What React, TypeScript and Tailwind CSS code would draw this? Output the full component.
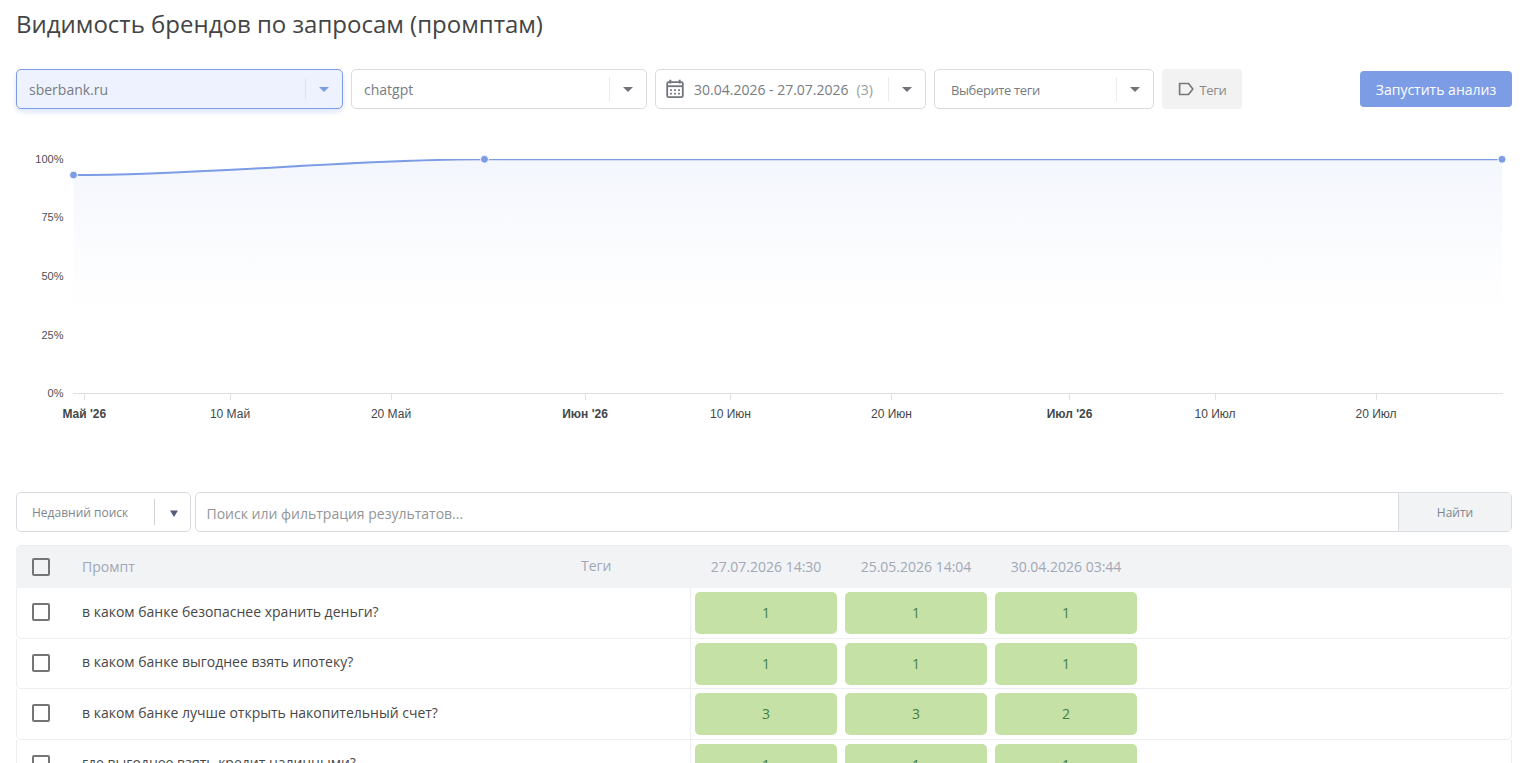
import React, { useState } from 'react';

const yLabels = [
  { text: '100%', y: 159 },
  { text: '75%', y: 217 },
  { text: '50%', y: 276 },
  { text: '25%', y: 335 },
  { text: '0%', y: 393 },
];

const xLabels = [
  { text: "Май '26", x: 84.3, bold: true },
  { text: '10 Май', x: 230, bold: false },
  { text: '20 Май', x: 391, bold: false },
  { text: "Июн '26", x: 585, bold: true },
  { text: '10 Июн', x: 730.5, bold: false },
  { text: '20 Июн', x: 891.5, bold: false },
  { text: "Июл '26", x: 1069.5, bold: true },
  { text: '10 Июл', x: 1215, bold: false },
  { text: '20 Июл', x: 1376, bold: false },
];

const points = [
  { x: 73.5, y: 175 },
  { x: 484.5, y: 159.3 },
  { x: 1502, y: 159.3 },
];

const dates = ['27.07.2026 14:30', '25.05.2026 14:04', '30.04.2026 03:44'];

const rows = [
  { prompt: 'в каком банке безопаснее хранить деньги?', values: [1, 1, 1] },
  { prompt: 'в каком банке выгоднее взять ипотеку?', values: [1, 1, 1] },
  { prompt: 'в каком банке лучше открыть накопительный счет?', values: [3, 3, 2] },
  { prompt: 'где выгоднее взять кредит наличными?', values: [1, 1, 1] },
];

function Caret({ className }: { className: string }) {
  return (
    <svg viewBox="0 0 10 5" className={`w-[10px] h-[5px] ${className}`} fill="currentColor">
      <path d="M0 0h10L5 5z" />
    </svg>
  );
}

function CalendarIcon() {
  return (
    <svg viewBox="0 0 18 20" className="w-[18px] h-5 text-[#70757c]" fill="none" stroke="currentColor">
      <rect x="1.2" y="3.2" width="15.6" height="15" rx="1.4" strokeWidth="1.8" />
      <path d="M1 7.2h16" strokeWidth="1.8" />
      <path d="M4.3 0.8v3.7M13.7 0.8v3.7" strokeWidth="2" />
      <path d="M4.1 11.2h10.5M4.1 14.6h10.5" strokeWidth="1.8" strokeDasharray="1.8 2.2" />
    </svg>
  );
}

function Select({ children, width }: { children: React.ReactNode; width: string }) {
  return (
    <div className={`${width} h-10 flex items-center border border-[#d9dbe0] rounded-[5px] bg-white text-[#777c83]`}>
      <div className="flex-1 flex items-center">{children}</div>
      <div className="w-px h-6 bg-[#ececf0]" />
      <div className="w-9 flex justify-center">
        <Caret className="text-[#70747a]" />
      </div>
    </div>
  );
}

function Checkbox() {
  const [checked, setChecked] = useState(false);
  return (
    <button
      onClick={() => setChecked(!checked)}
      className={`block w-[18px] h-[18px] border-2 border-[#757575] rounded-[2px] ${checked ? 'bg-[#7c9ce6]' : 'bg-transparent'}`}
    />
  );
}

function Chart() {
  const curve = 'M73.5 175C210.5 175 347.5 159.3 484.5 159.3H1502';
  return (
    <svg viewBox="0 140 1526 300" className="block w-[1526px] h-[300px] font-['Liberation_Sans',sans-serif]">
      <defs>
        <linearGradient id="area" x1="0" y1="159" x2="0" y2="393" gradientUnits="userSpaceOnUse">
          <stop offset="0" stopColor="#7c9ce6" stopOpacity="0.09" />
          <stop offset="0.45" stopColor="#7c9ce6" stopOpacity="0.02" />
          <stop offset="0.7" stopColor="#7c9ce6" stopOpacity="0" />
        </linearGradient>
        <clipPath id="plot">
          <rect x="70" y="159" width="1440" height="235" />
        </clipPath>
      </defs>
      {yLabels.map((l) => (
        <text key={l.text} x="63.5" y={l.y + 4} textAnchor="end" fontSize="11" fill="#4a4f52">
          {l.text}
        </text>
      ))}
      <path d={`${curve}V393.5H73.5Z`} fill="url(#area)" />
      <path d={curve} fill="none" stroke="#7c9ce6" strokeWidth="2" clipPath="url(#plot)" />
      <path d="M73 393.5H1503" stroke="#e0e0e0" />
      {xLabels.map((l) => (
        <g key={l.text}>
          <path d={`M${Math.floor(l.x) + 0.5} 394v6`} stroke="#e0e0e0" />
          <text
            x={l.x}
            y="418"
            textAnchor="middle"
            fontSize="12"
            fontWeight={l.bold ? 700 : 400}
            fill="#42474a"
          >
            {l.text}
          </text>
        </g>
      ))}
      {points.map((p) => (
        <circle key={p.x} cx={p.x} cy={p.y} r="4" fill="#7c9ce6" stroke="#fff" strokeWidth="1" />
      ))}
    </svg>
  );
}

export default function App() {
  const [query, setQuery] = useState('');

  return (
    <div className="w-[1526px] h-[763px] overflow-hidden bg-white font-['Open_Sans','Noto_Sans',sans-serif] text-sm">
      <h1 className="h-[69px] pl-4 pt-[6px] text-2xl leading-9 text-[#444]">
        Видимость брендов по запросам (промптам)
      </h1>

      <div className="h-[71px] pl-4 pr-[14px] flex items-start">
        <div className="w-[327px] h-10 flex items-center border border-[#7c9ce6] rounded-[5px] bg-[#eef2fe] shadow-[0_3px_5px_rgba(124,156,230,0.25)]">
          <span className="flex-1 pl-3 pt-[2px] text-[#777c83]">sberbank.ru</span>
          <div className="w-px h-5 bg-[#dde1ee]" />
          <div className="w-9 flex justify-center">
            <Caret className="text-[#7c9ce6]" />
          </div>
        </div>
        <div className="ml-2 flex gap-2">
          <Select width="w-[296px]">
            <span className="pl-3 pt-[2px]">chatgpt</span>
          </Select>
          <Select width="w-[271px]">
            <div className="pl-[10px] flex items-center whitespace-nowrap">
              <CalendarIcon />
              <span className="ml-[10px] pt-[2px]">30.04.2026 - 27.07.2026</span>
              <span className="ml-2 pt-[2px] text-[#9a9da3]">(3)</span>
            </div>
          </Select>
          <Select width="w-[220px]">
            <span className="pl-4 pt-[3px] text-[13px] tracking-[-0.38px]">Выберите теги</span>
          </Select>
          <button className="w-[80px] h-10 flex items-center justify-center gap-[6px] rounded bg-[#f2f2f2] text-[13px] tracking-[-0.38px] text-[#8a8a8a]">
            <svg viewBox="0 0 16 14" className="w-4 h-[14px] text-[#777]" fill="none" stroke="currentColor" strokeWidth="1.7">
              <path d="M1.6 1.5H10.5L14.8 7L10.5 12.5H1.6Z" strokeLinejoin="round" />
            </svg>
            <span className="pt-[3px]">Теги</span>
          </button>
        </div>
        <button className="ml-auto mt-[2px] pt-[2px] w-[152px] h-9 rounded bg-[#7c9ce6] text-white">
          Запустить анализ
        </button>
      </div>

      <Chart />

      <div className="mt-[52px] pl-4 pr-[14px] flex gap-1">
        <div className="w-[175px] h-10 flex items-center border border-[#d9dbe0] rounded-[5px] text-xs text-[#80858e]">
          <span className="flex-1 pl-[15px] pt-[2px]">Недавний поиск</span>
          <div className="w-px h-[26px] bg-[#d0d2d8]" />
          <div className="w-[35px] pl-[3px] pt-[3px] flex justify-center">
            <svg viewBox="0 0 8 7" className="w-2 h-[7px]" fill="#555a7d">
              <path d="M0 0.5h8L4 7z" />
            </svg>
          </div>
        </div>
        <div className="flex-1 h-10 flex border border-[#d9dbe0] rounded-[5px] overflow-hidden">
          <input
            value={query}
            onChange={(e) => setQuery(e.target.value)}
            placeholder="Поиск или фильтрация результатов..."
            className="flex-1 pl-[10.5px] pt-[4px] outline-none placeholder:text-[#92959a]"
          />
          <button className="w-[113px] pt-[2px] border-l border-[#d9dbe0] bg-[#f1f3f5] text-xs text-[#80858e]">
            Найти
          </button>
        </div>
      </div>

      <div className="mt-[13px] ml-4 mr-[14px]">
        <div className="h-[43px] flex items-center rounded-t-[5px] bg-[#f1f3f5] border-t border-[#ebedf0] text-[#a2a8b5]">
          <div className="w-[66px] pl-4">
            <Checkbox />
          </div>
          <div className="w-[499px]">Промпт</div>
          <div className="w-[110px] pb-[2px]">Теги</div>
          {dates.map((d) => (
            <div key={d} className="w-[150px] text-center">
              {d}
            </div>
          ))}
        </div>
        {rows.map((row) => (
          <div
            key={row.prompt}
            className="h-[50.5px] flex items-center border border-t-0 border-[#eceef1] rounded-b-[5px]"
          >
            <div className="w-[65px] pl-[15px] pb-px">
              <Checkbox />
            </div>
            <div className="w-[608px] pb-[2px] text-[#484848]">{row.prompt}</div>
            <div className="h-full flex items-center border-l border-[#eceef1]">
              {row.values.map((v, i) => (
                <div key={i} className="w-[150px] px-1 pt-px">
                  <div className="h-[42px] flex items-center justify-center rounded-[5px] bg-[#c5e1a5] text-[#43804a]">
                    {v}
                  </div>
                </div>
              ))}
            </div>
          </div>
        ))}
      </div>
    </div>
  );
}
